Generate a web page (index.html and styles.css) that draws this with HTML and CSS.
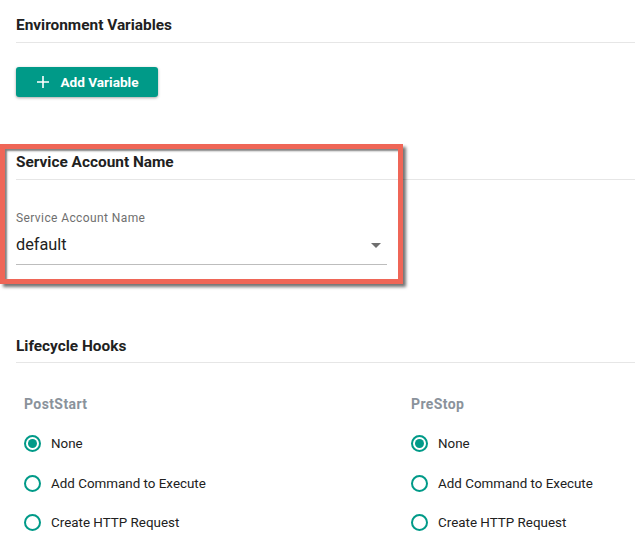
FILE: index.html
```html
<!DOCTYPE html>
<html>
<head>
<meta charset="utf-8">
<link rel="stylesheet" href="styles.css">
</head>
<body>
<div class="page">
  <section class="section env">
    <h2 class="section-title">Environment Variables</h2>
    <button class="btn-add" type="button">
      <svg class="plus" width="12" height="12" viewBox="0 0 12 12"><path d="M6 0V12M0 6H12" stroke="#fff" stroke-width="1.6"/></svg>
      <span>Add Variable</span>
    </button>
  </section>

  <section class="section sa">
    <h2 class="section-title">Service Account Name</h2>
    <div class="field">
      <div class="field-label">Service Account Name</div>
      <div class="select">
        <span class="select-value">default</span>
        <span class="caret"></span>
      </div>
    </div>
  </section>

  <section class="section hooks">
    <h2 class="section-title">Lifecycle Hooks</h2>
    <div class="hook-grid">
      <div class="hook">
        <div class="hook-title">PostStart</div>
        <label class="radio-row"><span class="radio checked"></span>None</label>
        <label class="radio-row"><span class="radio"></span>Add Command to Execute</label>
        <label class="radio-row"><span class="radio"></span>Create HTTP Request</label>
      </div>
      <div class="hook">
        <div class="hook-title">PreStop</div>
        <label class="radio-row"><span class="radio checked"></span>None</label>
        <label class="radio-row"><span class="radio"></span>Add Command to Execute</label>
        <label class="radio-row"><span class="radio"></span>Create HTTP Request</label>
      </div>
    </div>
  </section>

  <div class="highlight"></div>
</div>
</body>
</html>
```
FILE: styles.css
```css
* { box-sizing: border-box; }
html, body { margin: 0; padding: 0; }
body {
  width: 635px;
  height: 557px;
  overflow: hidden;
  background: #fff;
  font-family: Roboto, "Liberation Sans", Arial, sans-serif;
  color: #212121;
}
.page {
  position: relative;
  padding-left: 16px;
  width: 635px;
  overflow: hidden;
}
.section-title {
  margin: 0;
  font-size: 15.4px;
  line-height: 20px;
  font-weight: 700;
  color: #212121;
  padding-bottom: 7px;
  border-bottom: 1px solid #e6e6e6;
}
.env { padding-top: 15px; }
.btn-add {
  margin-top: 24px;
  width: 142px;
  height: 30px;
  display: flex;
  align-items: center;
  justify-content: center;
  gap: 11px;
  padding: 0 0 0 2px;
  border: none;
  border-radius: 3px;
  background: #009a88;
  color: #fff;
  font-family: inherit;
  font-size: 13.6px;
  font-weight: 700;
  box-shadow: 0 1px 3px rgba(0,0,0,0.35);
}
.plus { display: block; }
.sa { margin-top: 55px; }
.field { margin-top: 30px; width: 371px; }
.field-label {
  font-size: 12px;
  line-height: 16px;
  color: #6f6f6f;
  letter-spacing: 0.4px;
}
.select {
  margin-top: 9px;
  display: flex;
  align-items: center;
  justify-content: space-between;
  padding-bottom: 9px;
  border-bottom: 1px solid #bdbdbd;
}
.select-value {
  font-size: 16.3px;
  line-height: 20px;
  color: #212121;
}
.caret {
  width: 0;
  height: 0;
  margin-right: 6px;
  border-left: 5px solid transparent;
  border-right: 5px solid transparent;
  border-top: 5px solid #6f6f6f;
}
.hooks { margin-top: 71px; }
.hooks .section-title { padding-bottom: 6px; }
.hook-grid {
  display: grid;
  grid-template-columns: 387px 387px;
  margin-top: 31px;
}
.hook { padding-left: 8px; }
.hook-title {
  font-size: 14px;
  line-height: 20px;
  font-weight: 700;
  color: #8a929b;
  letter-spacing: 0.4px;
  margin-bottom: 10px;
}
.radio-row {
  display: flex;
  align-items: center;
  height: 39.5px;
  font-size: 13.4px;
  color: #212121;
  white-space: nowrap;
}
.radio {
  width: 17px;
  height: 17px;
  border: 2px solid #009a88;
  border-radius: 50%;
  margin-right: 10px;
  display: flex;
  align-items: center;
  justify-content: center;
  flex: none;
}
.radio.checked::after {
  content: "";
  width: 9px;
  height: 9px;
  border-radius: 50%;
  background: #009a88;
}
.highlight {
  position: absolute;
  left: 0;
  top: 144px;
  width: 403px;
  height: 140px;
  border: 5px solid #ef6657;
  box-shadow: 3px 3px 3px rgba(0,0,0,0.55), inset 2px 2px 2px rgba(0,0,0,0.5);
  pointer-events: none;
}
```
